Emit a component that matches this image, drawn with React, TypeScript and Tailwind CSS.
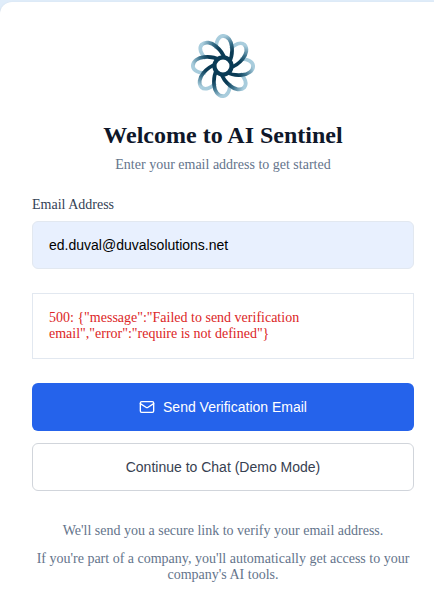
import React from "react";
import { Mail } from "lucide-react";

const PETAL_ANGLES = [0, 45, 90, 135, 180, 225, 270, 315];

function Logo() {
  return (
    <svg viewBox="-32 -32 64 64" className="size-16" fill="none" aria-hidden="true">
      <defs>
        <linearGradient id="petal" gradientUnits="userSpaceOnUse" x1="8" y1="-14" x2="1" y2="-30">
          <stop offset="0" stopColor="#0a3b55" />
          <stop offset="0.45" stopColor="#3a718b" />
          <stop offset="1" stopColor="#a9cddd" />
        </linearGradient>
        <linearGradient id="loop" gradientUnits="userSpaceOnUse" x1="0" y1="-16" x2="0" y2="-30">
          <stop offset="0" stopColor="#a3c9da" />
          <stop offset="1" stopColor="#a9cddd" />
        </linearGradient>
      </defs>
      {PETAL_ANGLES.map((angle) => (
        <path
          key={angle}
          d="M-6.6 -17.6C-7.6 -23.5 -4.6 -30.2 0.4 -30.2"
          stroke="url(#loop)"
          strokeWidth="3.7"
          transform={`rotate(${angle})`}
        />
      ))}
      {PETAL_ANGLES.map((angle) => (
        <path
          key={angle}
          d="M0 -30.2C5 -30.2 8.4 -25 8.9 -19C9.4 -13.5 9 -8.5 6.2 -4"
          stroke="url(#petal)"
          strokeWidth="3.7"
          transform={`rotate(${angle})`}
        />
      ))}
      <circle r="8.6" stroke="#0a3b55" strokeWidth="4.2" />
    </svg>
  );
}

export default function App() {
  return (
    <div className="h-[610px] overflow-hidden bg-[#e0edfa] pt-0.5 font-['Liberation_Serif',serif] text-sm leading-4">
      <main className="-mr-3 h-[640px] rounded-xl bg-white pt-8 pr-8 pl-8 shadow-sm">
        <div className="w-[382px]">
          <header className="flex flex-col items-center text-center">
            <Logo />
            <h1 className="mt-6 text-2xl leading-[27px] font-bold text-[#0f172a]">Welcome to AI Sentinel</h1>
            <p className="mt-2 text-[#64748b]">Enter your email address to get started</p>
          </header>
          <form className="mt-6" onSubmit={(event) => event.preventDefault()}>
            <label htmlFor="email" className="block text-[#334155]">Email Address</label>
            <input
              id="email"
              type="email"
              defaultValue="ed.duval@duvalsolutions.net"
              className="mt-2 block h-12 w-full rounded-md border border-[#e2e8f0] bg-[#e8f0fe] px-4 font-['Liberation_Sans',sans-serif] text-black outline-none"
            />
            <div role="alert" className="mt-6 border border-[#e2e8f0] p-4 text-[#dc2626]">
              {'500: {"message":"Failed to send verification email","error":"require is not defined"}'}
            </div>
            <button type="submit" className="mt-6 flex h-12 w-full items-center justify-center gap-2 rounded-md bg-[#2563eb] font-['Liberation_Sans',sans-serif] text-white">
              <Mail size={16} />
              Send Verification Email
            </button>
            <button type="button" className="mt-3 h-12 w-full rounded-md border border-[#d1d5db] bg-white font-['Liberation_Sans',sans-serif] text-[#374151]">
              Continue to Chat (Demo Mode)
            </button>
          </form>
          <footer className="mt-8 space-y-3 text-center text-[#64748b]">
            <p>We'll send you a secure link to verify your email address.</p>
            <p>If you're part of a company, you'll automatically get access to your company's AI tools.</p>
          </footer>
        </div>
      </main>
    </div>
  );
}
